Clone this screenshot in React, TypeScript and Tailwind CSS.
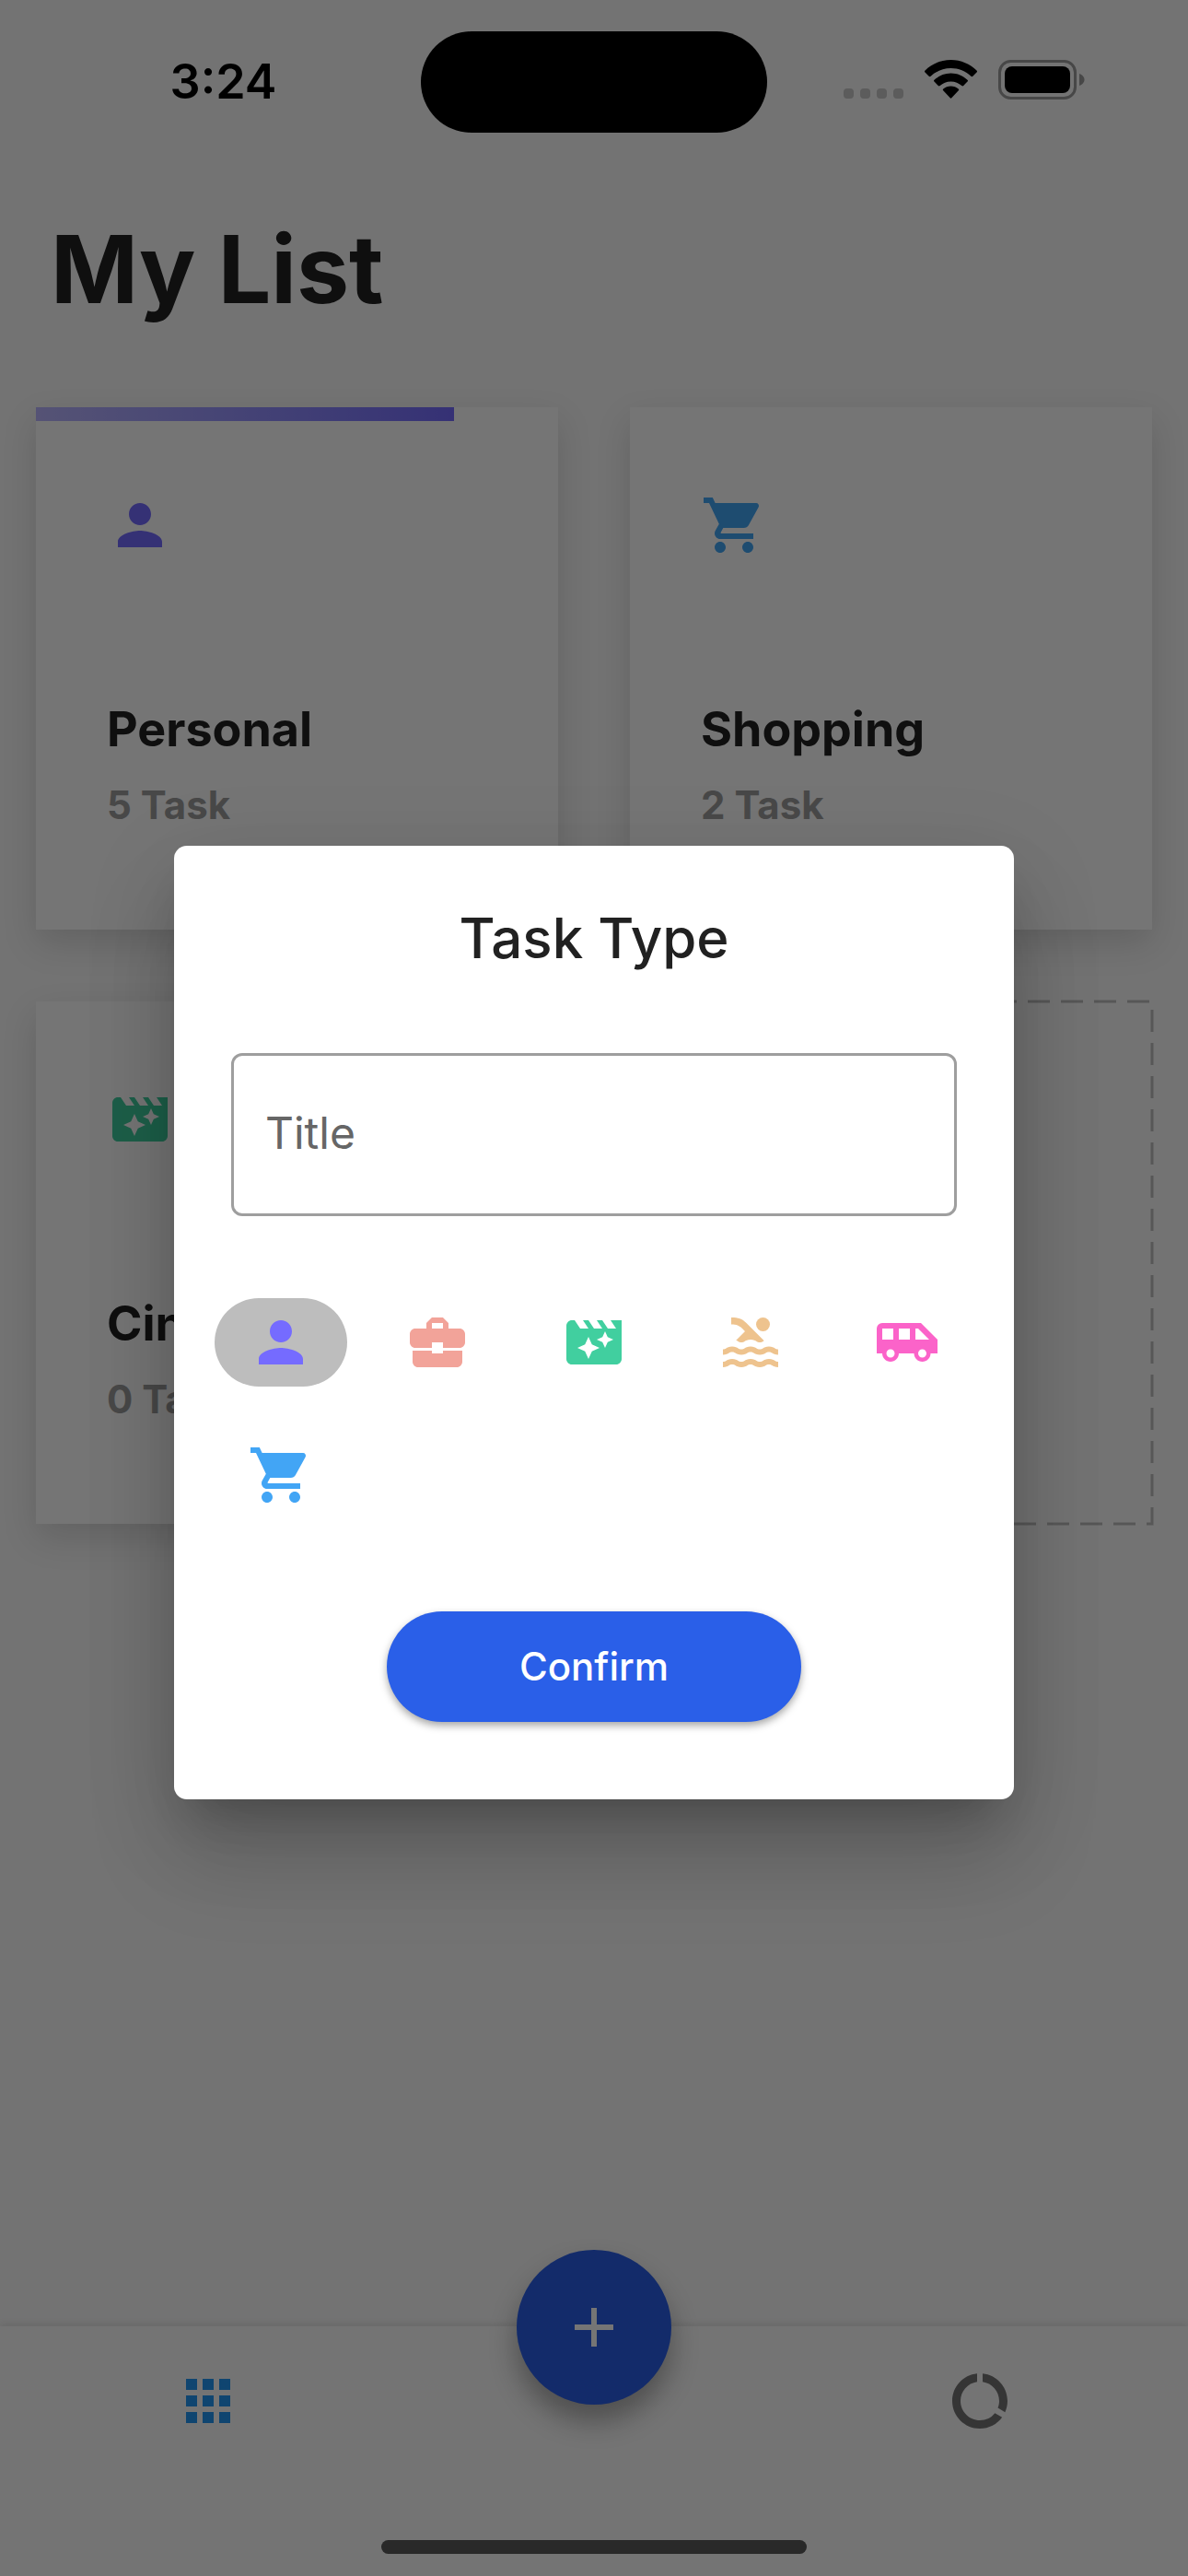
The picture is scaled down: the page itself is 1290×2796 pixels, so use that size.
import { useState, type ReactNode } from "react";
import type { IconType } from "react-icons";
import {
  MdAdd,
  MdAirportShuttle,
  MdApps,
  MdBusinessCenter,
  MdDataUsage,
  MdMovieFilter,
  MdPerson,
  MdPool,
  MdShoppingCart,
} from "react-icons/md";

type TaskType = { id: string; label: string; icon: IconType; color: string };

const taskTypes: TaskType[] = [
  { id: "personal", label: "Personal", icon: MdPerson, color: "text-[#756bff]" },
  { id: "work", label: "Work", icon: MdBusinessCenter, color: "text-[#f2a399]" },
  { id: "cinema", label: "Cinema", icon: MdMovieFilter, color: "text-[#41cf9f]" },
  { id: "sport", label: "Sport", icon: MdPool, color: "text-[#eec38e]" },
  { id: "travel", label: "Travel", icon: MdAirportShuttle, color: "text-[#fb63c9]" },
  { id: "shopping", label: "Shopping", icon: MdShoppingCart, color: "text-[#42a5f5]" },
];

function StatusBar() {
  return (
    <div className="relative z-20 grid grid-cols-[1fr_376px_1fr] items-start pt-[34px]">
      <div className="justify-self-center pt-[25px] pl-7 text-[52px] leading-[60px] font-semibold text-black">
        3:24
      </div>
      <div className="h-[110px] rounded-full bg-black" />
      <div className="flex items-center gap-[23px] pt-[31px] pl-[83px]">
        <svg viewBox="0 0 65 43" className="h-[43px] w-[65px]" aria-hidden="true">
          {[0, 18, 36, 54].map((x) => (
            <rect key={x} x={x} y="31" width="11" height="11" rx="4" fill="#5c5c5c" />
          ))}
        </svg>
        <svg viewBox="0 0 57 43" className="h-[43px] w-[57px]" aria-hidden="true">
          <path d="M28.500 0C17.500 0 7.500 4.500 .5 11.500c-.7.700-.7 1.300 0 2l4.200 4.300c.7.700 1.200.6 1.900 0C12.500 12.300 20 9 28.500 9s16 3.300 21.900 8.800c.7.600 1.200.7 1.900 0l4.200-4.300c.7-.7.700-1.300 0-2C49.500 4.500 39.500 0 28.500 0Z" />
          <path d="M28.500 14.500c-7 0-13.300 2.800-18 7.200-.7.700-.7 1.200 0 1.900l4.300 4.500c.7.700 1.200.6 1.900 0 3.100-2.800 7.200-4.600 11.800-4.600s8.700 1.800 11.800 4.600c.7.600 1.200.7 1.900 0l4.300-4.500c.7-.7.700-1.200 0-1.900-4.700-4.400-11-7.200-18-7.200Z" />
          <path d="M28.500 28.500c-3.200 0-6 1.100-8.200 3-.7.600-.7 1.200-.1 1.800l7.300 7.800c.7.800 1.300.8 2 0l7.300-7.800c.6-.6.600-1.200-.1-1.800-2.200-1.900-5-3-8.200-3Z" />
        </svg>
        <svg viewBox="0 0 94 43" className="h-[43px] w-[94px]" aria-hidden="true">
          <rect x="1.500" y="1.500" width="82" height="40" rx="12" fill="none" stroke="#474747" strokeWidth="3" />
          <rect x="7" y="7" width="71" height="29" rx="8" />
          <path d="M88 15v13c3-1 5.500-3.500 5.500-6.500S91 16 88 15Z" fill="#474747" />
        </svg>
      </div>
    </div>
  );
}

function TaskCard({ icon: Icon, color, name, count, children }: {
  icon: IconType;
  color: string;
  name: string;
  count: number;
  children?: ReactNode;
}) {
  return (
    <article className="relative flex aspect-square flex-col justify-between bg-white px-[77px] pt-[92px] pb-[105px] shadow-[0_15px_36px_rgba(0,0,0,0.14)]">
      {children}
      <Icon className={"size-[72px] " + color} />
      <div>
        <h2 className="text-[52px] leading-[72px] font-bold text-[#212121]">{name}</h2>
        <p className="mt-4 text-[42px] leading-[60px] font-bold text-[#9e9e9e]">{count} Task</p>
      </div>
    </article>
  );
}

function TaskTypeDialog() {
  const [selected, setSelected] = useState("personal");
  return (
    <form
      role="dialog"
      aria-labelledby="dialog-title"
      onSubmit={(e) => e.preventDefault()}
      className="flex w-[912px] max-w-full flex-col items-center rounded-[14px] bg-white pt-[58px] pb-[84px] shadow-[0_33px_45px_-21px_rgba(0,0,0,0.2),0_66px_100px_0px_rgba(0,0,0,0.14),0_27px_100px_6px_rgba(0,0,0,0.1)]"
    >
      <h2 id="dialog-title" className="text-[60px] leading-[84px] font-medium text-[#212121]">
        Task Type
      </h2>
      <div className="mt-[83px] w-full px-[62px]">
        <input
          type="text"
          aria-label="Title"
          placeholder="Title"
          className="h-[177px] w-full rounded-xl border-[3px] border-[#9e9e9e] px-[34px] pb-1 text-[48px] text-[#212121] outline-none placeholder:text-[#666666]"
        />
      </div>
      <fieldset className="mt-[89px] grid grid-cols-5 gap-x-[26px] gap-y-12">
        {taskTypes.map(({ id, label, icon: Icon, color }) => (
          <label
            key={id}
            className="flex h-24 w-36 cursor-pointer items-center justify-center rounded-full has-checked:bg-[#bdbdbd]"
          >
            <input
              type="radio"
              name="task-type"
              aria-label={label}
              className="sr-only"
              checked={selected === id}
              onChange={() => setSelected(id)}
            />
            <Icon className={"size-[72px] " + color} />
          </label>
        ))}
      </fieldset>
      <button
        type="submit"
        className="mt-[100px] h-[120px] w-[450px] rounded-full bg-[#2a5fe8] pb-0.5 text-[42px] font-medium text-white shadow-[0_4px_8px_rgba(0,0,0,0.35)]"
      >
        Confirm
      </button>
    </form>
  );
}

function BottomBar() {
  return (
    <nav className="relative grid h-[271px] grid-cols-[35%_30%_35%] items-start bg-[#fcfcfc] shadow-[0_-4px_6px_rgba(0,0,0,0.07)]">
      <button type="button" aria-label="Lists" className="mt-[45px] justify-self-center">
        <MdApps className="size-[72px] text-[#2196f3]" />
      </button>
      <button
        type="button"
        aria-label="Add task"
        className="-mt-[83px] flex size-[168px] items-center justify-center justify-self-center rounded-full bg-[#2a5fe8] text-white shadow-[0_18px_30px_rgba(0,0,0,0.32)]"
      >
        <MdAdd className="size-[72px]" />
      </button>
      <button type="button" aria-label="Statistics" className="mt-[45px] justify-self-center">
        <MdDataUsage className="size-[72px] text-[#757575]" />
      </button>
    </nav>
  );
}

export default function App() {
  return (
    <div className="relative flex min-h-screen flex-col bg-[#fafafa] font-['Inter',sans-serif]">
      <StatusBar />
      <main className="grow px-[39px]">
        <h1 className="mt-[82px] pl-4 text-[102px] leading-[132px] font-bold text-[#212121]">My List</h1>
        <section className="mt-[84px] grid grid-cols-2 gap-[78px]">
          <TaskCard icon={MdPerson} color="text-[#756bff]" name="Personal" count={5}>
            <div className="absolute inset-x-0 top-0 h-[15px]">
              <div className="h-full w-4/5 bg-linear-to-r from-[#bab5ff] to-[#756bff]" />
            </div>
          </TaskCard>
          <TaskCard icon={MdShoppingCart} color="text-[#42a5f5]" name="Shopping" count={2} />
          <TaskCard icon={MdMovieFilter} color="text-[#41cf9f]" name="Cinema" count={0} />
          <button type="button" aria-label="Add list" className="aspect-square">
            <svg className="size-full overflow-visible" aria-hidden="true">
              <rect width="100%" height="100%" fill="none" stroke="#bdbdbd" strokeWidth="3" strokeDasharray="24 12" />
            </svg>
          </button>
        </section>
      </main>
      <BottomBar />
      <div className="absolute inset-0 z-10 flex items-center justify-center bg-black/54 pt-[75px]">
        <TaskTypeDialog />
      </div>
      <div className="absolute inset-x-0 bottom-6 z-20 flex justify-center">
        <div className="h-[15px] w-[462px] rounded-full bg-[#292929]" />
      </div>
    </div>
  );
}
